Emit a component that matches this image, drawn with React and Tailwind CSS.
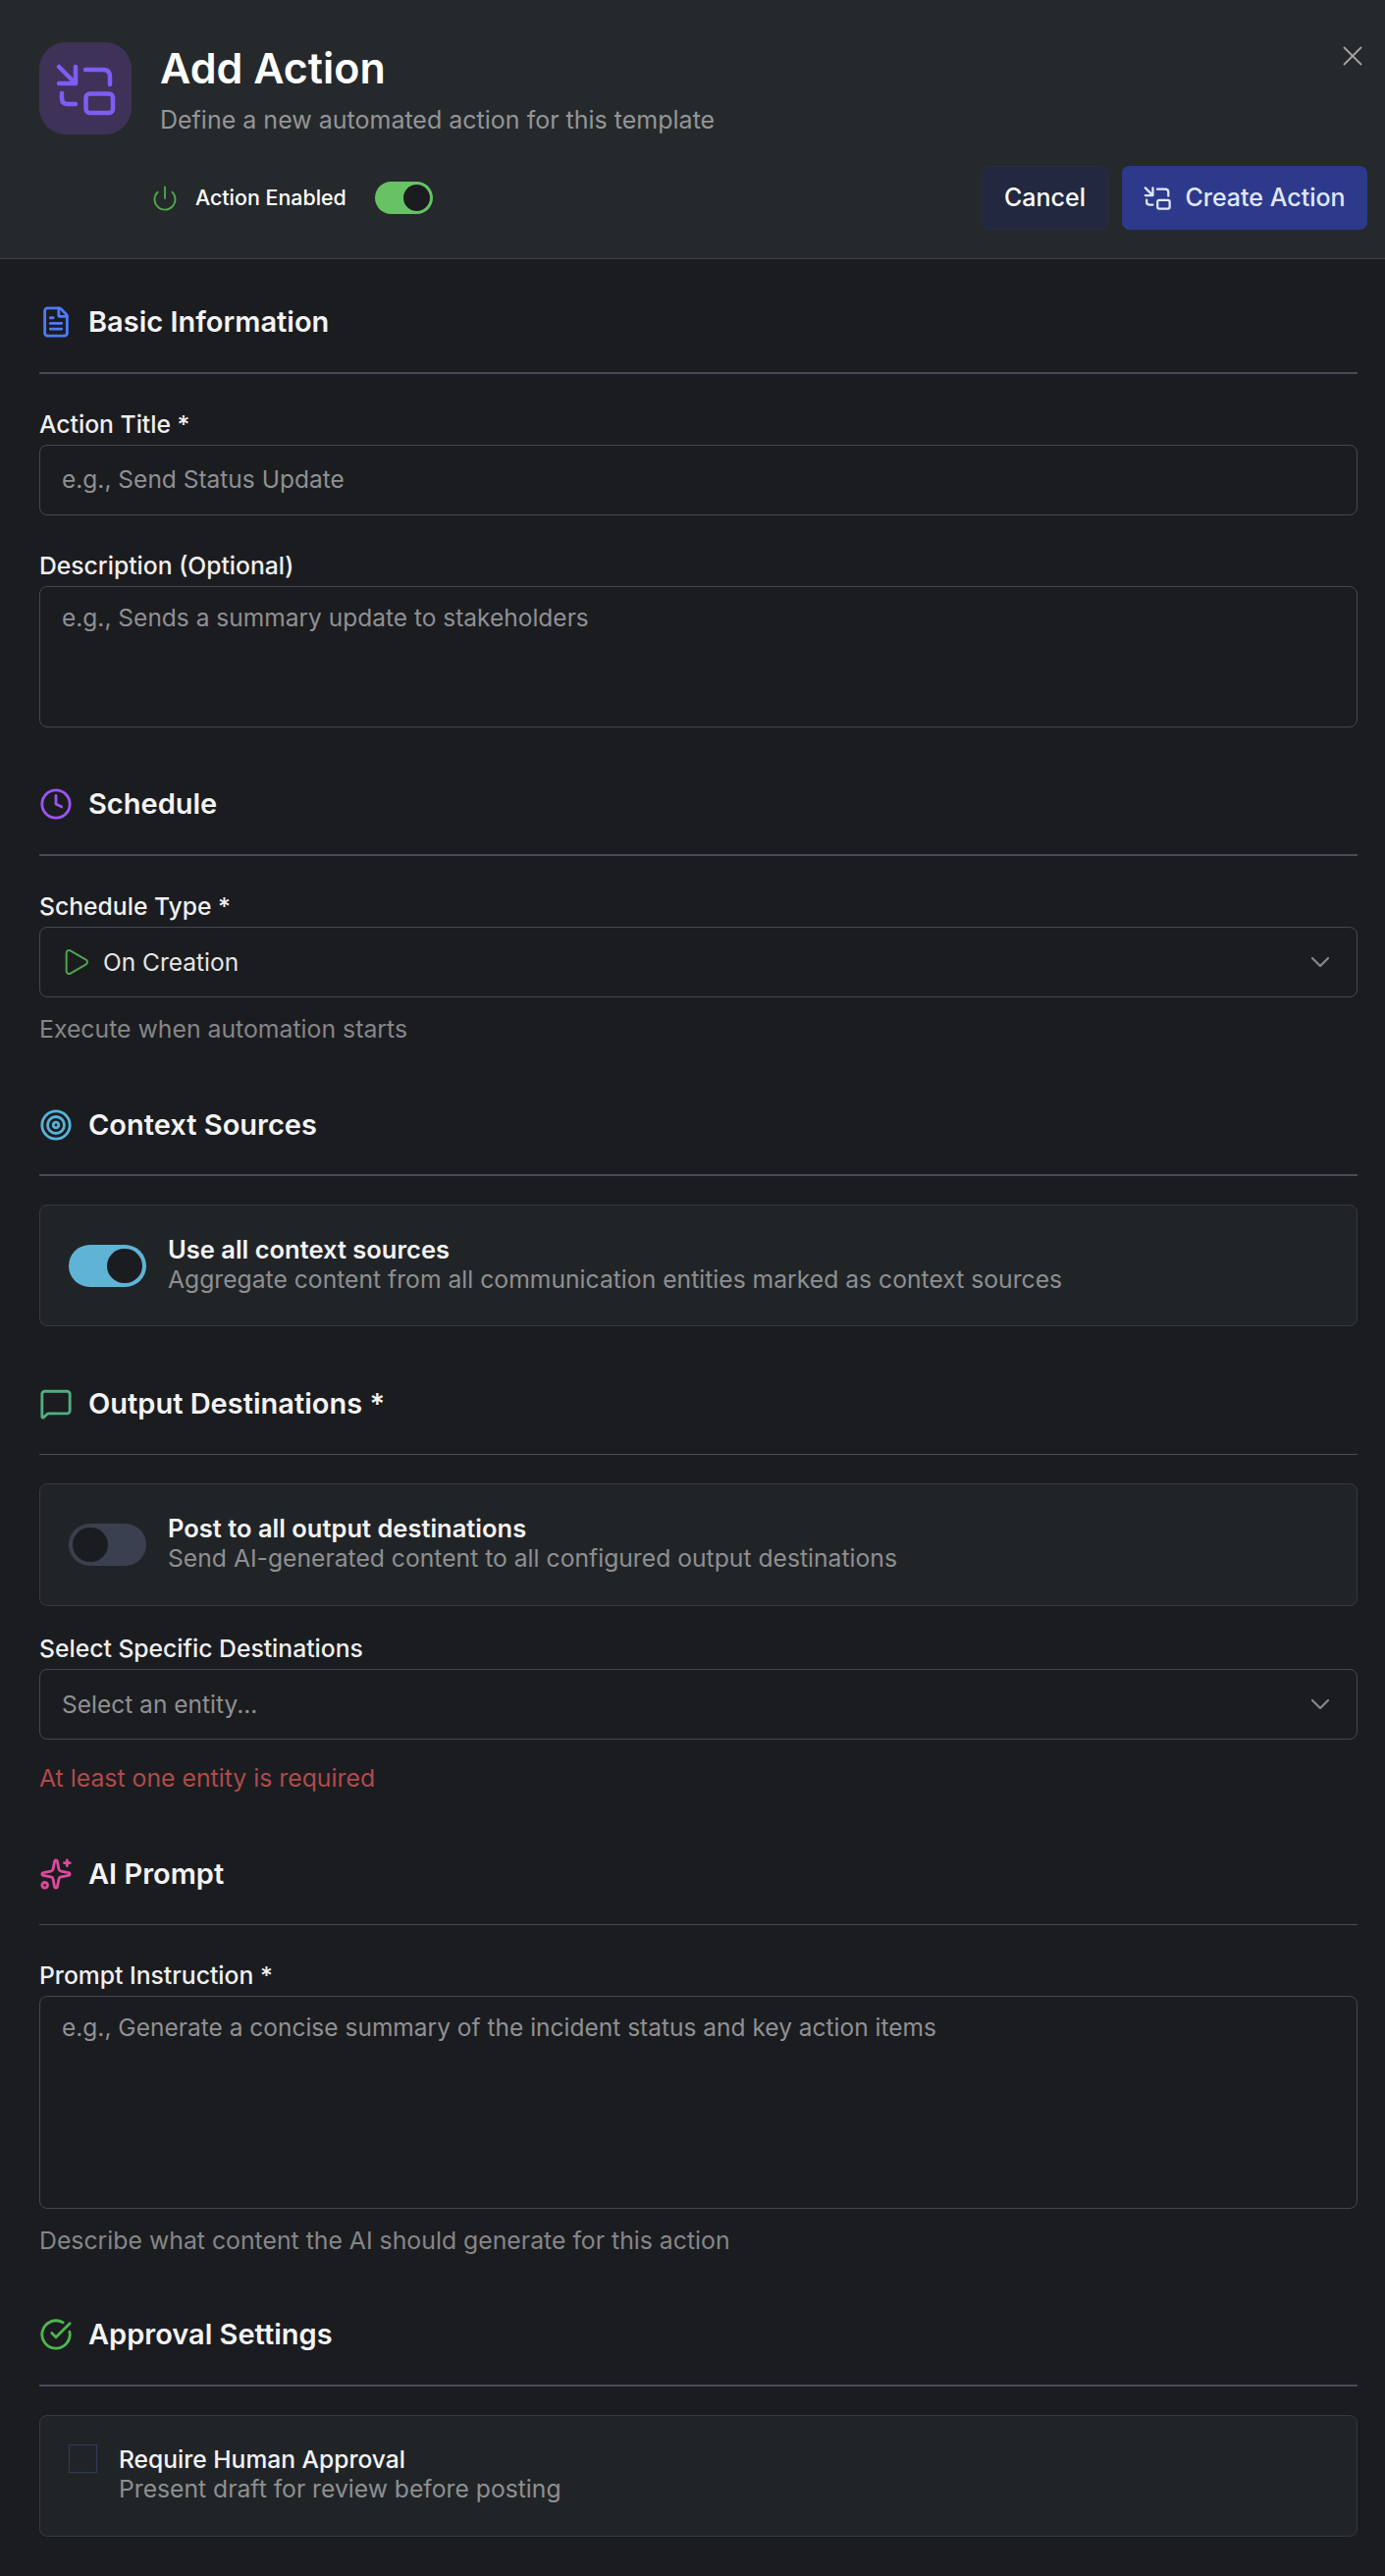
import React from "react";
import {
    ChevronDown,
    CircleCheckBig,
    Clock,
    FileText,
    MessageSquare,
    Play,
    Power,
    Sparkles,
    Target,
    X,
} from "lucide-react";

// the action glyph is not in the icon package, drawn on a 94 box
function ActionIcon({ className, viewBox = "0 0 94 94" }) {
    return (
        <svg
            viewBox={viewBox}
            fill="none"
            stroke="currentColor"
            strokeLinecap="round"
            strokeLinejoin="round"
            className={className}
        >
            <path d="M20 25 L36 41 M20 42 H37 V25" />
            <path d="M47 28 H65 Q72 28 72 35 V43" />
            <path d="M23 52 V57 Q23 63 29 63 H37" />
            <rect x="47.5" y="52.5" width="27.5" height="19.5" rx="4" />
        </svg>
    );
}

function SectionTitle({ icon: Icon, color, title, thick, className = "pb-[34px]" }) {
    return (
        <div
            className={`flex items-center gap-4 border-[#474b58] ${className} ${
                thick ? "border-b-2" : "border-b"
            }`}
        >
            <Icon className={`w-[34px] h-[34px] ${color}`} strokeWidth={2} />
            <h2 className="text-[29px] leading-[34px] font-semibold text-[#f3f3f4]">
                {title}
            </h2>
        </div>
    );
}

function Label({ children, className = "mt-[36px]" }) {
    return (
        <label
            className={`block text-[24.7px] leading-[30px] font-medium text-[#f0f0f1] mb-[6px] ${className}`}
        >
            {children}
        </label>
    );
}

function Helper({ children, className = "mt-[17px] text-[#858688]" }) {
    return <p className={`text-[24.8px] leading-[30px] ${className}`}>{children}</p>;
}

const fieldClass =
    "block w-full border border-[#45474b] rounded-lg bg-transparent px-[22px] text-[24.5px] placeholder:text-[#8f9092] outline-none";

function Toggle({ on, color }) {
    return (
        <div
            className={`w-[79px] h-[43px] shrink-0 rounded-full p-[4px] flex ${color} ${
                on ? "justify-end" : "justify-start"
            }`}
        >
            <div className="w-[36px] h-[35px] rounded-full bg-[#1b1c20]" />
        </div>
    );
}

function SwitchCard({ on, color, title, text, className }) {
    return (
        <div
            className={`border border-[#36393d] rounded-lg bg-[#212427] px-[29px] flex items-center gap-[22px] ${className}`}
        >
            <Toggle on={on} color={color} />
            <div className="leading-[30px] pb-[3px]">
                <div className="text-[25.5px] font-semibold text-[#f3f3f4]">{title}</div>
                <div className="text-[24.7px] text-[#8e8f91]">{text}</div>
            </div>
        </div>
    );
}

function App() {
    return (
        <div
            className="min-h-[2624px] bg-[#1b1c20]"
            style={{ fontFamily: "Inter, 'Noto Sans', sans-serif" }}
        >
            {/* Header */}
            <header className="relative bg-[#25292c] border-b border-[#3a3e42] pt-[43px] pl-[40px] pr-[18px] pb-[29px]">
                <button className="absolute top-[40px] right-[16px] text-[#a3a3a3]" aria-label="Close">
                    <X className="w-[34px] h-[34px]" strokeWidth={1.3} />
                </button>
                <div className="flex gap-[29px]">
                    <div className="w-[94px] h-[94px] rounded-[27px] bg-[#3e3258]">
                        <ActionIcon className="w-[94px] h-[94px] text-[#7f5cf5] stroke-[4.5]" />
                    </div>
                    <div>
                        <h1 className="text-[43px] leading-[52px] font-semibold text-white">
                            Add Action
                        </h1>
                        <p className="text-[25px] leading-[30px] mt-[12px] text-[#949596]">
                            Define a new automated action for this template
                        </p>
                    </div>
                </div>
                <div className="flex items-center justify-between mt-[32px]">
                    <div className="flex items-center pl-[114px]">
                        <Power className="w-[28px] h-[28px] text-[#4da64d]" strokeWidth={1.6} />
                        <span className="ml-[17px] text-[21.4px] font-medium text-white">
                            Action Enabled
                        </span>
                        <div className="ml-[29px] w-[59px] h-[33px] rounded-full p-[3px] bg-[#66c264] flex justify-end">
                            <div className="w-[27px] h-[27px] rounded-full bg-[#1b1c20]" />
                        </div>
                    </div>
                    <div className="flex gap-[14px]">
                        <button className="w-[129px] h-[65px] rounded-lg bg-[#222840] border border-[#272d45] text-[25px] font-medium text-white">
                            Cancel
                        </button>
                        <button className="w-[250px] h-[65px] rounded-lg bg-[#2d3a8c] flex items-center justify-center gap-[14px] text-[25px] font-medium text-[#e0e7ff]">
                            <ActionIcon viewBox="16 22 62 53" className="w-[28px] h-[24px] stroke-[5]" />
                            Create Action
                        </button>
                    </div>
                </div>
            </header>

            {/* Form */}
            <main className="pl-[40px] pr-[28px] pt-[47px]">
                <SectionTitle icon={FileText} color="text-[#4d7cf6]" title="Basic Information" thick />
                <Label>Action Title *</Label>
                <input
                    className={`${fieldClass} h-[72px] pb-[3px] text-[#e5e5e6]`}
                    placeholder="e.g., Send Status Update"
                />
                <Label>Description (Optional)</Label>
                <textarea
                    className={`${fieldClass} h-[144px] py-[16px] leading-[30px] resize-none text-[#e5e5e6]`}
                    placeholder="e.g., Sends a summary update to stakeholders"
                />

                <div className="mt-[61px]">
                    <SectionTitle icon={Clock} color="text-[#9b55f0]" title="Schedule" thick />
                </div>
                <Label>Schedule Type *</Label>
                <div className={`${fieldClass} h-[72px] flex items-center text-[#e5e5e6]`}>
                    <Play className="w-[32px] h-[32px] text-[#4da64d] -ml-[2px]" strokeWidth={1.5} />
                    <span className="ml-[12px]">On Creation</span>
                    <ChevronDown className="ml-auto -mr-[1px] w-[32px] h-[32px] text-[#858688]" strokeWidth={1.7} />
                </div>
                <Helper>Execute when automation starts</Helper>

                <div className="mt-[66px]">
                    <SectionTitle
                        icon={Target}
                        color="text-[#56b4d8]"
                        title="Context Sources"
                        thick
                        className="pb-[33px]"
                    />
                </div>
                <SwitchCard
                    on
                    color="bg-[#5fb4d6]"
                    title="Use all context sources"
                    text="Aggregate content from all communication entities marked as context sources"
                    className="mt-[29px] h-[124px]"
                />

                <div className="mt-[62px]">
                    <SectionTitle icon={MessageSquare} color="text-[#4fb080]" title="Output Destinations *" />
                </div>
                <SwitchCard
                    color="bg-[#3b4050]"
                    title="Post to all output destinations"
                    text="Send AI-generated content to all configured output destinations"
                    className="mt-[29px] h-[125px]"
                />
                <Label className="mt-[28px]">Select Specific Destinations</Label>
                <div className={`${fieldClass} h-[72px] flex items-center text-[#8f9092]`}>
                    <span>Select an entity...</span>
                    <ChevronDown className="ml-auto -mr-[1px] w-[32px] h-[32px] text-[#858688]" strokeWidth={1.7} />
                </div>
                <Helper className="mt-[24px] text-[#b04a4a]">At least one entity is required</Helper>

                <div className="mt-[66px]">
                    <SectionTitle icon={Sparkles} color="text-[#dc4a9c]" title="AI Prompt" />
                </div>
                <Label className="mt-[36px]">Prompt Instruction *</Label>
                <textarea
                    className={`${fieldClass} h-[217px] py-[16px] leading-[30px] resize-none text-[#e5e5e6]`}
                    placeholder="e.g., Generate a concise summary of the incident status and key action items"
                />
                <Helper>Describe what content the AI should generate for this action</Helper>

                <div className="mt-[64px]">
                    <SectionTitle icon={CircleCheckBig} color="text-[#4fb54f]" title="Approval Settings" thick />
                </div>
                <div className="mt-[29px] h-[124px] border border-[#36393d] rounded-lg bg-[#212427] px-[29px] pt-[29px] flex gap-[22px]">
                    <div className="w-[29px] h-[29px] shrink-0 border border-[#2f3b55]" />
                    <div className="leading-[30px]">
                        <div className="text-[24.6px] font-medium text-[#f3f3f4]">Require Human Approval</div>
                        <div className="text-[24.7px] text-[#8e8f91]">Present draft for review before posting</div>
                    </div>
                </div>
            </main>
        </div>
    );
}

export default App;
